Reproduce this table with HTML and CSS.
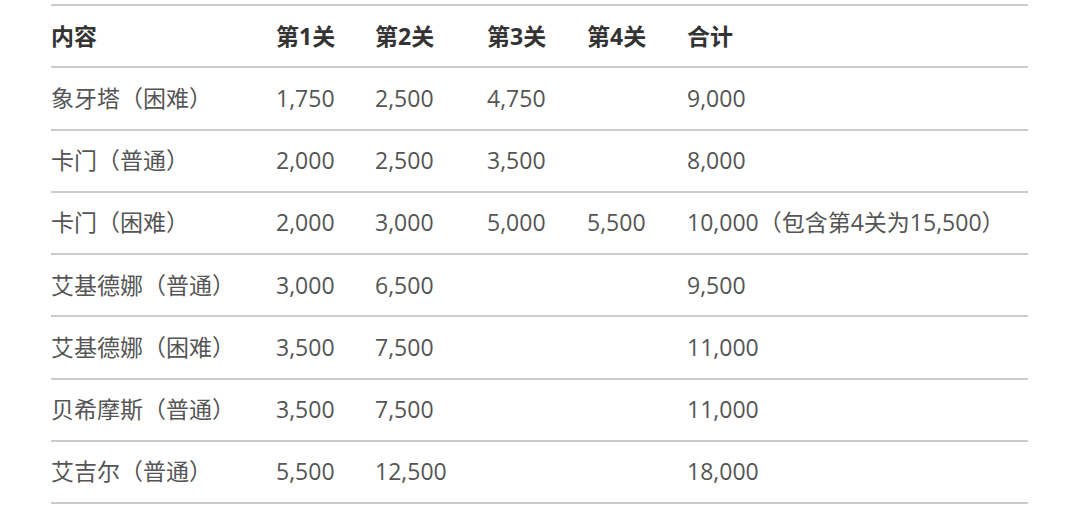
FILE: index.html
```html
<!DOCTYPE html>
<html lang="zh">
<head>
<meta charset="utf-8">
<link rel="stylesheet" href="styles.css">
</head>
<body>
<div class="table">
  <div class="row head">
    <div>内容</div><div>第1关</div><div>第2关</div><div>第3关</div><div>第4关</div><div>合计</div>
  </div>
  <div class="row">
    <div>象牙塔（困难）</div><div>1,750</div><div>2,500</div><div>4,750</div><div></div><div>9,000</div>
  </div>
  <div class="row">
    <div>卡门（普通）</div><div>2,000</div><div>2,500</div><div>3,500</div><div></div><div>8,000</div>
  </div>
  <div class="row">
    <div>卡门（困难）</div><div>2,000</div><div>3,000</div><div>5,000</div><div>5,500</div><div>10,000（包含第4关为15,500）</div>
  </div>
  <div class="row">
    <div>艾基德娜（普通）</div><div>3,000</div><div>6,500</div><div></div><div></div><div>9,500</div>
  </div>
  <div class="row">
    <div>艾基德娜（困难）</div><div>3,500</div><div>7,500</div><div></div><div></div><div>11,000</div>
  </div>
  <div class="row">
    <div>贝希摩斯（普通）</div><div>3,500</div><div>7,500</div><div></div><div></div><div>11,000</div>
  </div>
  <div class="row">
    <div>艾吉尔（普通）</div><div>5,500</div><div>12,500</div><div></div><div></div><div>18,000</div>
  </div>
</div>
</body>
</html>
```
FILE: styles.css
```css
html, body {
  margin: 0;
  padding: 0;
  background: #ffffff;
}
body {
  font-family: "Open Sans", "Noto Sans CJK SC", sans-serif;
  font-size: 23px;
  color: #555555;
  padding: 4px 0 0 51px;
}
.table {
  width: 977px;
  border-top: 2px solid #cbcbcb;
}
.row {
  display: grid;
  grid-template-columns: 225px 99px 112px 100px 100px 1fr;
  height: 60.25px;
  align-items: center;
  border-bottom: 2px solid #cbcbcb;
}
.row > div {
  line-height: 1;
}
.head {
  font-weight: bold;
  color: #333333;
}
```
